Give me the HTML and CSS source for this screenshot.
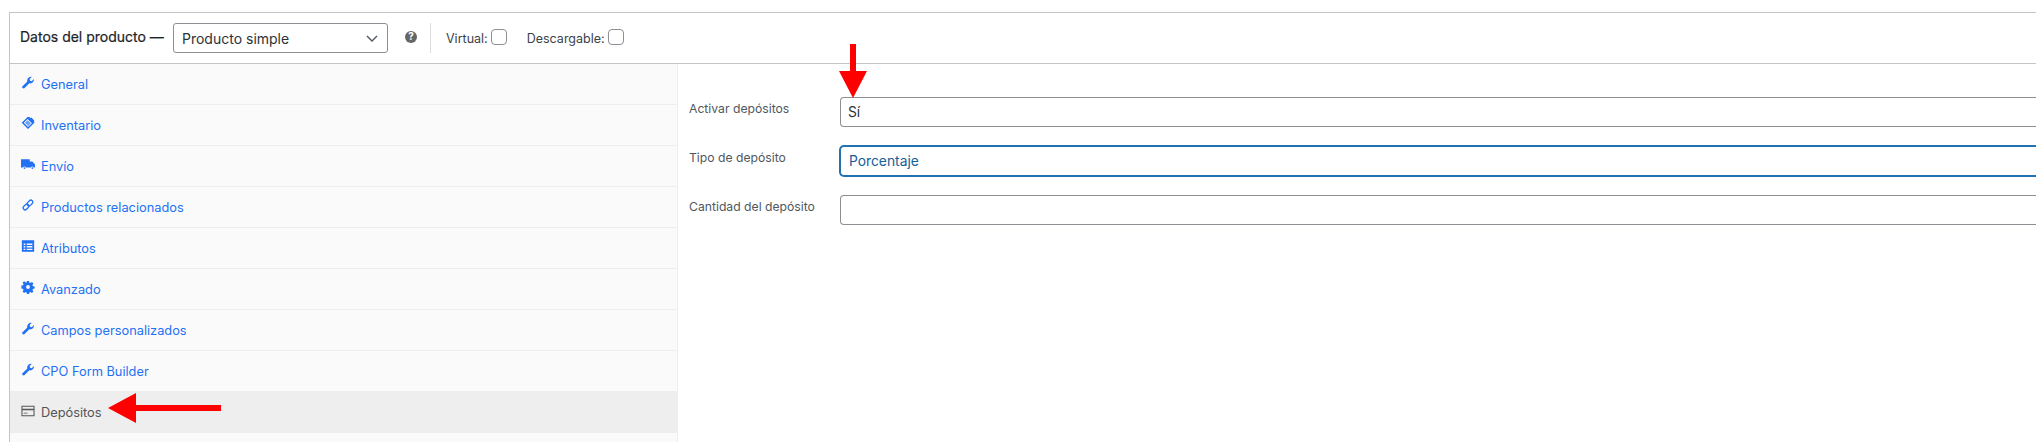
FILE: index.html
```html
<!DOCTYPE html>
<html lang="es">
<head>
<meta charset="utf-8">
<title>Datos del producto</title>
<link rel="stylesheet" href="styles.css">
</head>
<body>
<div class="panel">
  <header class="head">
    <h2 class="title">Datos del producto —</h2>
    <div class="select type-select"><span>Producto simple</span>
      <svg class="chev" viewBox="0 0 16 16"><path d="M3 6l5 5 5-5" fill="none" stroke="#50575e" stroke-width="1.4"/></svg>
    </div>
    <svg class="help" viewBox="0 0 16 16"><circle cx="8" cy="8" r="6" fill="#666"/><text x="8" y="11.2" text-anchor="middle" class="help-q">?</text></svg>
    <div class="opts">
      <label class="opt">Virtual:<span class="check"></span></label>
      <label class="opt">Descargable:<span class="check"></span></label>
    </div>
  </header>
  <div class="body">
    <ul class="tabs">
      <li class="tab"><svg class="ico" viewBox="0 0 16 16"><path d="M1.5 13.2L7.200 7.300C6.800 5.600 7.300 4 8.600 3c1-.8 2.400-1.100 3.600-.7L9.900 4.600l.4 2 2 .4 2.300-2.300c.3 1.400-.1 2.700-1 3.700-1 1.100-2.600 1.500-4.100 1.100l-5.700 5.700c-.5.4-1.500.1-2-.4s-.8-1.100-.3-1.600z"/></svg>General</li>
      <li class="tab"><svg class="ico" viewBox="0 0 16 16"><path d="M.8 7.800L7.500 1.200h2.200l1.100 1 1-.4 3.400 3.400-.4 1.200.7.900-7.500 7.600z M7.500 3.400L3.200 7.800l4.800 4.800 4.400-4.400z" fill-rule="evenodd"/><path d="M4.600 7.800l3-3 3.600 3.600-3 3z" opacity=".65"/></svg>Inventario</li>
      <li class="tab"><svg class="ico" viewBox="0 0 16 16"><path d="M0 2.500h10v2.500h3l3 3.500v3.500h-1.500a1.700 1.700 0 0 0-3.200 0H5.500a1.700 1.700 0 0 0-3.200 0H0z"/><circle cx="4" cy="12.700" r="1"/><circle cx="13" cy="12.700" r="1"/></svg>Envío</li>
      <li class="tab"><svg class="ico" viewBox="0 0 16 16"><g fill="none" stroke="currentColor" stroke-width="1.500"><rect x="8" y="2" width="4.500" height="7.500" rx="2.200" transform="rotate(45 10.200 5.700)"/><rect x="3.500" y="6.500" width="4.500" height="7.500" rx="2.200" transform="rotate(45 5.700 10.200)"/></g></svg>Productos relacionados</li>
      <li class="tab"><svg class="ico" viewBox="0 0 16 16"><path fill-rule="evenodd" d="M1 1.500h14v13H1zM3 5v1.800h2V5zm3.500 0v1.800H13V5zM3 8v1.800h2V8zm3.500 0v1.800H13V8zM3 11v1.500h2V11zm3.500 0v1.500H13V11z"/></svg>Atributos</li>
      <li class="tab"><svg class="ico" viewBox="0 0 16 16"><path fill-rule="evenodd" d="M6.800 1h2.400l.4 2 1.200.5 1.700-1.100 1.700 1.700-1.100 1.700.5 1.200 2 .4v2.400l-2 .4-.5 1.200 1.100 1.700-1.700 1.700-1.700-1.100-1.200.5-.4 2H6.800l-.4-2-1.200-.5-1.700 1.100-1.700-1.700 1.100-1.700-.5-1.200-2-.4V6.400l2-.4.5-1.200-1.100-1.700 1.700-1.700 1.700 1.100L6.400 3zM8 5.800a2.200 2.200 0 1 0 0 4.400 2.200 2.200 0 0 0 0-4.400z"/></svg>Avanzado</li>
      <li class="tab"><svg class="ico" viewBox="0 0 16 16"><path d="M1.500 13.200L7.200 7.300C6.800 5.600 7.300 4 8.600 3c1-.8 2.400-1.100 3.600-.7L9.900 4.600l.4 2 2 .4 2.300-2.300c.3 1.400-.1 2.700-1 3.700-1 1.100-2.600 1.500-4.100 1.100l-5.700 5.700c-.5.4-1.500.1-2-.4s-.8-1.100-.3-1.600z"/></svg>Campos personalizados</li>
      <li class="tab"><svg class="ico" viewBox="0 0 16 16"><path d="M1.500 13.200L7.200 7.300C6.800 5.600 7.300 4 8.600 3c1-.8 2.400-1.100 3.600-.7L9.900 4.600l.4 2 2 .4 2.300-2.300c.3 1.400-.1 2.700-1 3.700-1 1.100-2.600 1.500-4.100 1.100l-5.700 5.700c-.5.4-1.500.1-2-.4s-.8-1.100-.3-1.600z"/></svg>CPO Form Builder</li>
      <li class="tab active"><svg class="ico" viewBox="0 0 16 16"><path fill-rule="evenodd" d="M.5 2h15v12H.5zM1.700 3.200v2.300h12.600V3.200zm0 3.800v5.800h12.600V7zM3 10h4.500v.8H3z"/></svg>Depósitos</li>
    </ul>
    <div class="fields">
      <div class="field"><span class="label">Activar depósitos</span><div class="input">Sí</div></div>
      <div class="field"><span class="label">Tipo de depósito</span><div class="input focus">Porcentaje</div></div>
      <div class="field"><span class="label">Cantidad del depósito</span><div class="input"></div></div>
    </div>
  </div>
</div>
<svg class="arrow arrow-down" viewBox="0 0 30 54"><path d="M12 0h6v27h11L15 54 1 27h11z" fill="#fe0000"/></svg>
<svg class="arrow arrow-left" viewBox="0 0 114 30"><path d="M0 15L28 0v12h85v6H28v12z" fill="#fe0000"/></svg>
</body>
</html>
```
FILE: styles.css
```css
* { box-sizing: border-box; }
html, body { margin: 0; height: 442px; overflow: hidden; background: #fff; }
body { font-family: Inter, "Liberation Sans", sans-serif; color: #1d2327; font-size: 13px; position: relative; }
.panel { margin: 12px 0 0 9px; border: solid #c3c4c7; border-width: 1px 0 0 1px; height: 430px; display: flex; flex-direction: column; }
.head { height: 51px; flex: none; display: flex; align-items: center; padding-left: 10px; border-bottom: 1px solid #c3c4c7; }
.title { margin: 0 8px 0 0; width: 145px; flex: none; font-size: 14px; font-weight: 400; white-space: nowrap; position: relative; top: -2px; -webkit-text-stroke: 0.2px #1d2327; }
.select { display: flex; align-items: center; justify-content: space-between; height: 30px; border: 1px solid #8c8f94; border-radius: 3px; padding: 0 7px 0 8px; font-size: 14px; color: #2c3338; }
.type-select { width: 215px; }
.chev { width: 16px; height: 16px; }
.help { width: 16px; height: 16px; margin: -2px 0 0 15px; }
.help-q { font-size: 10px; font-weight: 700; fill: #fff; }
.opts { display: flex; align-items: center; gap: 20px; height: 30px; margin-left: 11px; padding-left: 15px; border-left: 1px solid #dcdcde; }
.opt { display: flex; align-items: center; gap: 3px; color: #3c434a; font-size: 12.5px; }
.check { width: 16px; height: 16px; margin-top: -2px; border: 1px solid #8c8f94; border-radius: 4px; background: #fff; }
.body { display: flex; flex: 1; min-height: 0; }
.tabs { list-style: none; margin: 0; padding: 0; width: 668px; flex: none; background: #fafafa; border-right: 1px solid #eee; }
.tab { height: 41px; display: flex; align-items: center; gap: 6px; padding-left: 11px; color: #2271f5; border-bottom: 1px solid #eee; font-size: 12.8px; }
.tab.active { background: #eee; color: #555; border-bottom: 0; }
.ico { width: 14px; height: 14px; fill: currentColor; flex: none; position: relative; top: -2px; }
.fields { flex: 1; padding: 33px 0 0 11px; display: flex; flex-direction: column; gap: 19px; min-width: 0; }
.field { display: flex; align-items: flex-start; }
.label { width: 151px; flex: none; color: #50575e; font-size: 12.2px; line-height: 16px; padding-top: 4px; }
.input { flex: 1; height: 30px; border: 1px solid #8c8f94; border-right: 0; border-radius: 4px 0 0 4px; padding-left: 7px; font-size: 13.8px; line-height: 28px; color: #2c3338; background: #fff; }
.input.focus { border-color: #2271b1; box-shadow: 0 0 0 1px #2271b1; color: #135e96; padding-left: 8px; }
.arrow { position: absolute; display: block; }
.arrow-down { left: 838px; top: 44px; width: 30px; height: 54px; }
.arrow-left { left: 108px; top: 393px; width: 114px; height: 30px; }
```
